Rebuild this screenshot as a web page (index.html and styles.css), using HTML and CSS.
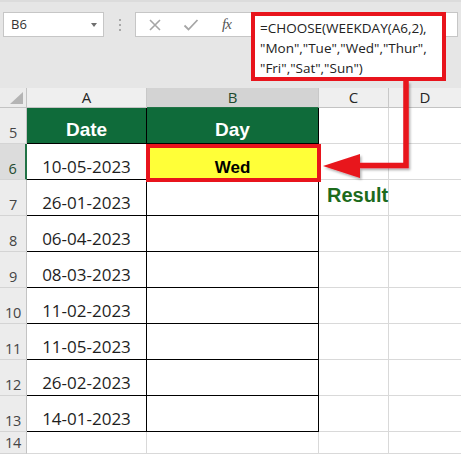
FILE: index.html
```html
<!DOCTYPE html>
<html>
<head>
<meta charset="utf-8">
<link rel="stylesheet" href="styles.css">
</head>
<body>
<div class="app">
  <div class="toolbar">
    <div class="namebox"><span class="nb-text">B6</span><span class="dd"></span></div>
    <div class="sep"><i></i><i></i><i></i></div>
    <div class="fbar">
      <svg class="ico" width="14" height="14" viewBox="0 0 14 14"><path d="M2 2 L12 12 M12 2 L2 12" stroke="#a6a6a6" stroke-width="1.6" fill="none"/></svg>
      <svg class="ico" width="16" height="14" viewBox="0 0 16 14"><path d="M1.5 7.5 L5.5 11.5 L14.5 2" stroke="#a6a6a6" stroke-width="1.8" fill="none"/></svg>
      <span class="fx">fx</span>
    </div>
  </div>
  <div class="sheet">
    <div class="c corner"><span class="tri"></span></div>
    <div class="c ch">A</div>
    <div class="c ch chsel">B</div>
    <div class="c ch">C</div>
    <div class="c ch last">D</div>

    <div class="c rh">5</div>
    <div class="c t hd">Date</div>
    <div class="c t hd">Day</div>
    <div class="c"></div>
    <div class="c last"></div>

    <div class="c rh rhsel">6</div>
    <div class="c t dt">10-05-2023</div>
    <div class="c t res"><span class="resv">Wed</span></div>
    <div class="c"></div>
    <div class="c last"></div>

    <div class="c rh">7</div>
    <div class="c t dt">26-01-2023</div>
    <div class="c t"></div>
    <div class="c lbl">Result</div>
    <div class="c last"></div>

    <div class="c rh">8</div>
    <div class="c t dt">06-04-2023</div>
    <div class="c t"></div>
    <div class="c"></div>
    <div class="c last"></div>

    <div class="c rh">9</div>
    <div class="c t dt">08-03-2023</div>
    <div class="c t"></div>
    <div class="c"></div>
    <div class="c last"></div>

    <div class="c rh">10</div>
    <div class="c t dt">11-02-2023</div>
    <div class="c t"></div>
    <div class="c"></div>
    <div class="c last"></div>

    <div class="c rh">11</div>
    <div class="c t dt">11-05-2023</div>
    <div class="c t"></div>
    <div class="c"></div>
    <div class="c last"></div>

    <div class="c rh">12</div>
    <div class="c t dt">26-02-2023</div>
    <div class="c t"></div>
    <div class="c"></div>
    <div class="c last"></div>

    <div class="c rh">13</div>
    <div class="c t dt">14-01-2023</div>
    <div class="c t"></div>
    <div class="c"></div>
    <div class="c last"></div>

    <div class="c rh">14</div>
    <div class="c"></div>
    <div class="c"></div>
    <div class="c"></div>
    <div class="c last"></div>
  </div>

  <div class="callout">=CHOOSE(WEEKDAY(A6,2),<br>"Mon","Tue","Wed","Thur",<br>"Fri","Sat","Sun")</div>

  <svg class="arrow" width="461" height="454" viewBox="0 0 461 454">
    <defs>
      <filter id="sh" x="-20%" y="-20%" width="140%" height="140%">
        <feDropShadow dx="1.5" dy="2" stdDeviation="1.2" flood-color="#000" flood-opacity="0.3"/>
      </filter>
    </defs>
    <g filter="url(#sh)">
      <polyline points="406,81 406,165.5 356,165.5" fill="none" stroke="#e8141c" stroke-width="5.5" stroke-linejoin="miter"/>
      <polygon points="323,166 360,154 360,178" fill="#e8141c"/>
    </g>
  </svg>
</div>
</body>
</html>
```

FILE: styles.css
```css
* { box-sizing: border-box; }
html, body { margin: 0; padding: 0; background: #fff; }
body { width: 461px; height: 454px; overflow: hidden; font-family: "Open Sans", "Liberation Sans", sans-serif; }

.app { position: relative; width: 461px; height: 454px; overflow: hidden; }

.toolbar {
  height: 88px;
  background: #e6e6e6;
  border-top: 2px solid #dcdcdc;
  padding-top: 10px;
  display: flex;
  align-items: flex-start;
}
.namebox {
  margin-left: 3px;
  width: 101px;
  height: 25px;
  background: #fff;
  border: 1px solid #c6c6c6;
  display: flex;
  align-items: center;
  justify-content: space-between;
  padding: 0 6px 0 7px;
}
.nb-text { font-size: 13px; color: #333; line-height: 23px; }
.dd {
  width: 0; height: 0;
  border-left: 3.5px solid transparent;
  border-right: 3.5px solid transparent;
  border-top: 4px solid #6e6e6e;
}
.sep {
  width: 31px;
  height: 25px;
  display: flex;
  flex-direction: column;
  align-items: center;
  justify-content: center;
  gap: 3px;
}
.sep i { display: block; width: 2px; height: 2px; background: #a8a8a8; }
.fbar {
  width: 323px;
  height: 25px;
  background: #fff;
  border: 1px solid #c6c6c6;
  display: flex;
  align-items: center;
  padding-left: 12px;
  gap: 21px;
}
.fx { font-family: "Liberation Serif", serif; font-style: italic; font-size: 15px; color: #555; margin-left: 2px; letter-spacing: -1px; }

.sheet {
  display: grid;
  grid-template-columns: 27px 120px 172px 70px 72px;
  grid-template-rows: 20px repeat(9, 36px) 22px;
}
.c {
  border-right: 1px solid #d9d9d9;
  border-bottom: 1px solid #d9d9d9;
  display: flex;
  align-items: flex-end;
  justify-content: center;
  white-space: nowrap;
}
.c.last { border-right: none; }
.corner { background: #ececec; border-right-color: #c3c3c3; border-bottom-color: #c3c3c3; position: relative; }
.tri {
  position: absolute; right: 3px; bottom: 3px;
  width: 0; height: 0;
  border-left: 13px solid transparent;
  border-bottom: 12px solid #b4b4b4;
}
.ch {
  background: #efefef;
  border-right-color: #c8c8c8;
  border-bottom-color: #c3c3c3;
  align-items: flex-start;
  font-size: 15px;
  line-height: 19px;
  color: #262626;
}
.chsel { background: #d3d3d3; color: #1f4b2f; border-bottom-color: #217346; }
.rh {
  background: #ececec;
  border-right-color: #c3c3c3;
  border-bottom-color: #d4d4d4;
  font-size: 14.5px;
  line-height: 20px;
  color: #444;
  letter-spacing: -0.3px;
}
.rhsel { background: #dcdcdc; color: #1f4b2f; border-right: 2px solid #217346; }
.t { border-right-color: #000; border-bottom-color: #000; }
.hd {
  background: #0f6b3a;
  color: #fff;
  font-family: "Liberation Sans", Arial, sans-serif;
  font-weight: bold;
  font-size: 19px;
  line-height: 22px;
  padding-bottom: 2px;
}
.dt { font-size: 17px; line-height: 20px; padding-bottom: 2px; color: #1e1e1e; }
.res { background: #ffff38; position: relative; }
.res::after {
  content: "";
  position: absolute;
  left: -1px; top: 0; right: -3px; bottom: -3px;
  border: 4px solid #e8141c;
}
.resv {
  font-family: "Liberation Sans", Arial, sans-serif;
  font-weight: bold;
  font-size: 17px;
  line-height: 20px;
  padding-bottom: 1px;
  color: #000;
}
.lbl {
  justify-content: flex-start;
  align-items: flex-start;
  padding: 3px 0 0 8px;
  font-family: "Liberation Sans", Arial, sans-serif;
  font-weight: bold;
  font-size: 20px;
  line-height: 24px;
  color: #1c6b1c;
  overflow: visible;
}

.callout {
  position: absolute;
  left: 251px; top: 12px;
  width: 195px; height: 69px;
  background: #fff;
  border: 4px solid #e8141c;
  padding: 1.5px 0 0 5px;
  font-size: 13.5px;
  line-height: 20px;
  color: #222;
  white-space: nowrap;
}
.arrow { position: absolute; left: 0; top: 0; pointer-events: none; }
```
